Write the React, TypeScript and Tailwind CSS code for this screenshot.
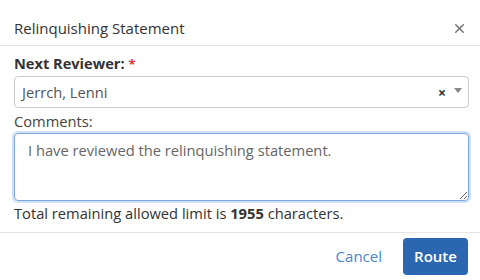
import { X } from "lucide-react";

export default function App() {
  return (
    <div className="flex h-[280px] w-[480px] flex-col bg-white font-['Open_Sans',sans-serif] text-[#333]">
      {/* ─── Header ─── */}
      <div className="flex h-[46px] shrink-0 items-center justify-between border-b border-[#e5e5e5] pl-[14px] pr-[13px] pt-[11px]">
        <h1 className="text-[15px] leading-[20px] text-[#333]">Relinquishing Statement</h1>
        <button type="button" aria-label="Close" className="text-[#777]">
          <X className="h-[15px] w-[15px]" strokeWidth={2.5} />
        </button>
      </div>

      {/* ─── Body ─── */}
      <div className="flex flex-col pl-[14px] pr-[11px] pt-[7px]">
        <label className="text-[14.6px] font-bold leading-[20px] text-[#333]">
          Next Reviewer:<span className="ml-[4px] text-[13px] text-[#d9343f]">*</span>
        </label>
        <div className="mt-[2px] flex h-[32px] items-center rounded-[4px] border border-[#ccc] pl-[7px] pr-[6px]">
          <span className="flex-1 text-[14.7px] text-[#555]">Jerrch, Lenni</span>
          <span className="mt-[2px] text-[14px] font-bold leading-none text-[#333]">×</span>
          <span className="ml-[8px] mb-[4px] h-0 w-0 border-x-[4px] border-t-[5px] border-x-transparent border-t-[#888]" />
        </div>
        <label className="mt-[2px] text-[14.7px] leading-[22px] text-[#444]">Comments:</label>
        <textarea
          readOnly
          defaultValue="I have reviewed the relinquishing statement."
          className="mt-[1px] h-[68px] resize-y rounded-[4px] border border-[#7aa7e0] px-[13px] pb-[4px] pt-[5px] text-[14.7px] leading-[22px] text-[#666] shadow-[0_0_0_2px_rgba(122,167,224,0.35)] outline-none"
        />
        <p className="mt-[2px] text-[14.7px] leading-[20px] text-[#333]">
          Total remaining allowed limit is <b>1955</b> characters.
        </p>
      </div>

      {/* ─── Footer ─── */}
      <div className="mt-[9px] flex flex-1 items-center justify-end gap-[21px] border-t border-[#e5e5e5] pr-[12px]">
        <button type="button" className="text-[15px] text-[#4a86cf]">
          Cancel
        </button>
        <button
          type="button"
          className="h-[37px] w-[65px] rounded-[4px] bg-[#2b67b0] text-[15px] font-semibold text-white"
        >
          Route
        </button>
      </div>
    </div>
  );
}
